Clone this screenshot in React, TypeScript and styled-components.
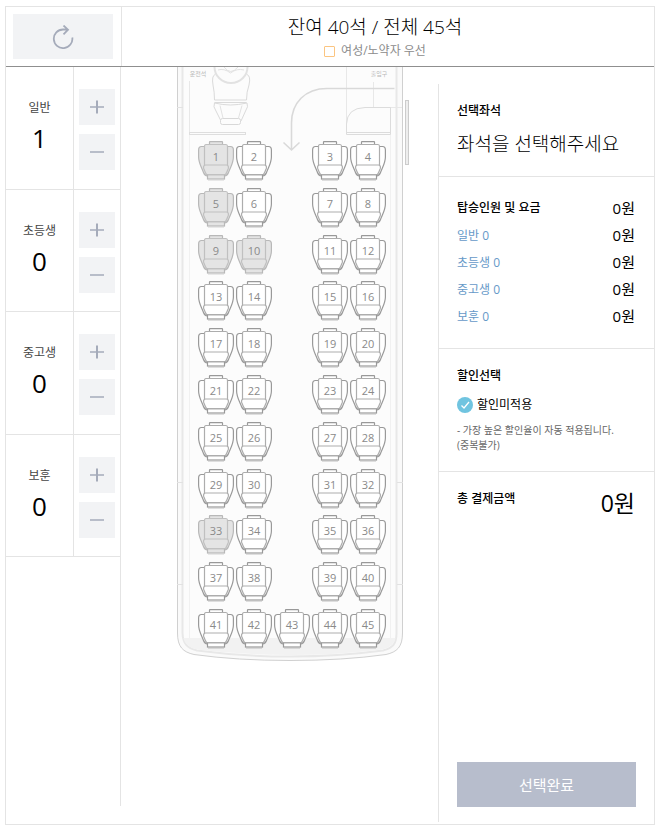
import React, { useState } from "react";
import styled, { createGlobalStyle, css } from "styled-components";

const GlobalStyle = createGlobalStyle`
  * { box-sizing: border-box; }
  body {
    margin: 0;
    background: #fff;
    color: #000;
    font-family: "Open Sans", "Noto Sans CJK KR", sans-serif;
    font-size: 12px;
  }
  button, input { font: inherit; margin: 0; padding: 0; border: 0; }
  h1, h2, p { margin: 0; font-weight: 400; }
`;

const Page = styled.div`
  padding: 6px 6px 6px 5px;
`;

const Frame = styled.main`
  display: flex;
  flex-direction: column;
  min-height: calc(100vh - 12px);
  border: 1px solid #e4e4e4;
`;

const Header = styled.header`
  display: grid;
  grid-template-columns: 116px 1fr;
  height: 60px;
  border-bottom: 1px solid #8f8f8f;
`;

const ResetCell = styled.div`
  padding: 7px;
  border-right: 1px solid #e4e4e4;
`;

const ResetButton = styled.button`
  display: grid;
  place-items: center;
  width: 100px;
  height: 45px;
  background: #f2f3f5;
  cursor: pointer;
`;

const Summary = styled.div`
  display: flex;
  flex-direction: column;
  align-items: center;
  padding: 6px 26px 0 0;
`;

const Remaining = styled.h1`
  font-size: 19px;
  font-weight: 300;
  line-height: 28px;
`;

const Legend = styled.p`
  display: flex;
  align-items: center;
  gap: 6px;
  color: #8c8c8c;
  line-height: 20px;
`;

const Swatch = styled.span`
  width: 11px;
  height: 11px;
  border: 1px solid #fbc581;
  border-radius: 1px;
`;

const Body = styled.div`
  display: grid;
  grid-template-columns: 115px 1fr 216px;
  flex: 1;
`;

const Passengers = styled.section`
  margin-bottom: 18px;
  border-right: 1px solid #e4e4e4;
`;

const PassengerRows = styled.div`
  display: grid;
  grid-template-rows: repeat(4, 1fr);
  height: 490px;
`;

const PassengerRow = styled.div`
  display: grid;
  grid-template-columns: 68px 1fr;
  border-bottom: 1px solid #e4e4e4;
`;

const PassengerCount = styled.div`
  display: flex;
  flex-direction: column;
  align-items: center;
  padding-top: 32px;
  border-right: 1px solid #e4e4e4;
`;

const PassengerName = styled.span`
  color: #444;
  line-height: 18px;
`;

const PassengerNumber = styled.output`
  margin-top: 3px;
  font-size: 26px;
  line-height: 36px;
`;

const Steppers = styled.div`
  display: flex;
  flex-direction: column;
  gap: 9px;
  padding: 22px 5px 0;
`;

const StepButton = styled.button`
  display: grid;
  place-items: center;
  width: 36px;
  height: 36px;
  background: #f2f3f5;
  cursor: pointer;
`;

const BusArea = styled.section`
  display: flex;
  justify-content: center;
  align-items: flex-start;
  padding-left: 29px;
`;

const Bus = styled.div`
  position: relative;
  width: 234px;
  height: 596px;
  padding: 74px 0 0 21px;
`;

const BusDrawing = styled.svg`
  position: absolute;
  inset: 0;
`;

const Seats = styled.div`
  position: relative;
  display: grid;
  grid-template-columns: repeat(5, 36px);
  grid-template-rows: repeat(11, 40px);
  column-gap: 2px;
  align-content: space-between;
  height: 508px;
`;

const SeatButton = styled.button<{ $column: number; $active: boolean }>`
  display: grid;
  grid-column: ${(p) => p.$column};
  background: none;
  color: #8a8a8a;
  font-size: 11px;
  line-height: 32px;
  cursor: pointer;
  & > * { grid-area: 1 / 1; }
  svg {
    fill: ${(p) => (p.$active ? "#cfe6f4" : "#fff")};
    stroke: #999;
    stroke-width: 1.2;
  }
  .inner { stroke: #adadad; }
  &:disabled { cursor: default; }
  &:disabled svg { fill: #e4e4e4; stroke: #b8b8b8; }
  &:disabled .inner { stroke: #c0c0c0; }
`;

const Side = styled.aside`
  display: flex;
  flex-direction: column;
  margin: 17px 0 2px;
  border-left: 1px solid #e4e4e4;
`;

const Block = styled.section<{ $top: number; $bottom: number; $last?: boolean }>`
  padding: ${(p) => p.$top}px 19px ${(p) => p.$bottom}px 18px;
  ${(p) => !p.$last && css`border-bottom: 1px solid #e4e4e4;`}
`;

const Title = styled.h2`
  font-size: 12px;
  font-weight: 500;
  line-height: 20px;
`;

const Chosen = styled.p`
  margin-top: 8px;
  font-size: 19px;
  font-weight: 300;
  line-height: 30px;
`;

const Fare = styled.div`
  display: flex;
  justify-content: space-between;
  align-items: center;
  height: 27px;
`;

const FareName = styled.span`
  color: #6699c8;
`;

const Price = styled.span`
  font-size: 15px;
  line-height: 20px;
`;

const Discount = styled.label`
  display: flex;
  align-items: center;
  gap: 4px;
  margin-top: 9px;
  line-height: 20px;
`;

const Radio = styled.input`
  appearance: none;
  width: 16px;
  height: 16px;
  border-radius: 50%;
  background: #70c4e0;
`;

const RadioMark = styled.span`
  display: grid;
  & > * { grid-area: 1 / 1; }
  svg { pointer-events: none; }
`;

const Note = styled.p`
  margin-top: 8px;
  color: #666;
  font-size: 10px;
  line-height: 15px;
`;

const Total = styled.div`
  display: flex;
  justify-content: space-between;
`;

const TotalPrice = styled.strong`
  font-size: 23px;
  font-weight: 400;
  line-height: 28px;
`;

const Submit = styled.button`
  height: 45px;
  margin: auto 18px 15px;
  background: #b7bdcc;
  color: #fff;
  font-size: 15px;
  cursor: pointer;
`;

const groups = ["일반", "초등생", "중고생", "보훈"];
const taken = new Set([1, 5, 9, 10, 33]);
const columns = [1, 2, 4, 5];
const seats = Array.from({ length: 45 }, (_, i) => ({
  number: i + 1,
  column: i < 40 ? columns[i % 4] : i - 39,
}));

function Seat({ number, column, active, onToggle }: {
  number: number; column: number; active: boolean; onToggle: () => void;
}) {
  return (
    <SeatButton type="button" $column={column} $active={active} aria-pressed={active}
      disabled={taken.has(number)} onClick={onToggle}>
      <svg width="36" height="40" viewBox="0 0 36 40" aria-hidden="true">
        <path d="M10 39.500h16" strokeOpacity=".3" />
        <path d="M7 5.500H3.500Q.6 5.500.6 9V16C.6 22 3.500 26 5.500 31.500Q6.500 34.500 9.500 35H26.500Q29.500 34.500 30.500 31.500C32.500 26 35.400 22 35.400 16V9Q35.400 5.500 32.500 5.500H29z" />
        <rect x="11.500" y=".6" width="13" height="4" rx=".5" />
        <path className="inner" d="M8 3.500H28Q29.500 3.500 29.500 5.500V25H6.500V5.500Q6.500 3.500 8 3.500z" />
        <path className="inner" d="M7.500 24H28.500Q31 24.500 30.300 27.500Q29 31.500 26.500 35H9.500Q7 31.500 5.700 27.500Q5 24.500 7.500 24z" />
        <rect x="9.500" y="33.800" width="17" height="4.200" />
      </svg>
      <span>{number}</span>
    </SeatButton>
  );
}

function BusShape() {
  return (
    <BusDrawing width="234" height="596" viewBox="0 0 234 596" fill="none" stroke="#e2e2e2" aria-hidden="true">
      <path d="M.5-2V566C.5 580 6 585 17 587.500Q60 593.500 113 593.500Q166 593.500 209 587.500C220 585 225.500 580 225.500 566V-2" fill="#fafafa" stroke="#d0d0d0" />
      <path d="M5.500-2V566C6 577 10 581 20 583.500Q65 589.500 113 589.500Q161 589.500 206 583.500C216 581 219.500 577 219.500 566V-2" fill="#fcfcfc" stroke="#e8e8e8" strokeWidth="2" />
      <path d="M6.500 571H218.500Q217 580 205 582.500Q160 588 113 588Q65 588 20 582.500Q8 580 6.500 571z" fill="#f2f2f2" stroke="none" />
      <path d="M12.500 14V571M213.500 40V571" stroke="#f1f1f1" />
      <path d="M0 40.500H6M0 415.500H6M220 415.500H226M0 517.500H6M220 517.500H226" />
      <path d="M12.500 14V65M169.500 0V66M196.500 15V40M213 40.500H225" stroke="#e8e8e8" />
      <path d="M37.500 0A16.500 16 0 0 0 70.500 0" strokeWidth="2" />
      <path d="M47 0Q53.500 9 61 0M41 3Q47 1 53.500 6Q60 1 67 3" />
      <path d="M38 7.500Q34.500 9 36 18Q37.500 25 37.500 33H69.500Q69.500 25 72 18Q74 9 70 7.500M37.500 35.500H69.500" stroke="#dadada" />
      <path d="M37.500 36Q36 40 38.500 43L44 54M70 36Q71.500 40 69 43L64 54M37.500 36Q46 38 53.500 38T70 36" stroke="#dadada" />
      <path d="M43 38.500L46 51M65 38.500L61.500 51" />
      <rect x="43.500" y="51.500" width="20" height="6" rx="2" fill="#fcfcfc" stroke="#d8d8d8" />
      <rect x="12.500" y="65.500" width="56" height="2" stroke="#dedede" />
      <path d="M169.500 67.500V57Q170 41 188 40.500H213.500V67.500zM169.500 65.500H213.500" stroke="#dcdcdc" />
      <path d="M217.500 21.500H150C128 21.500 114.500 36 114.500 56V83M106.500 75.500L114.500 83L122.500 75.500" stroke="#d9d9d9" strokeWidth="1.600" />
      <rect x="228.500" y="33.500" width="3" height="64" fill="#eee" stroke="#ccc" />
      <g fill="#b8b8b8" stroke="none" fontSize="6" textAnchor="middle">
        <text x="21" y="9">운전석</text>
        <text x="202" y="9">출입구</text>
      </g>
    </BusDrawing>
  );
}

export default function App() {
  const [counts, setCounts] = useState([1, 0, 0, 0]);
  const [selected, setSelected] = useState<number[]>([]);
  const step = (index: number, by: number) =>
    setCounts((c) => c.map((n, i) => (i === index ? Math.max(0, n + by) : n)));
  const toggle = (n: number) =>
    setSelected((s) => (s.includes(n) ? s.filter((x) => x !== n) : [...s, n]));
  const reset = () => {
    setCounts([1, 0, 0, 0]);
    setSelected([]);
  };

  return (
    <Page>
      <GlobalStyle />
      <Frame>
        <Header>
          <ResetCell>
            <ResetButton type="button" aria-label="초기화" onClick={reset}>
              <svg width="22" height="24" viewBox="0 0 22 24" fill="none" stroke="#a5abba" strokeWidth="1.800" aria-hidden="true">
                <path d="M20.300 12.500A9.300 9.300 0 1 1 11 4.500H15.500M11.500.5L16 4.700L11.500 9.300" />
              </svg>
            </ResetButton>
          </ResetCell>
          <Summary>
            <Remaining>잔여 40석 / 전체 45석</Remaining>
            <Legend><Swatch />여성/노약자 우선</Legend>
          </Summary>
        </Header>
        <Body>
          <Passengers>
            <PassengerRows>
              {groups.map((name, i) => (
                <PassengerRow key={name}>
                  <PassengerCount>
                    <PassengerName>{name}</PassengerName>
                    <PassengerNumber>{counts[i]}</PassengerNumber>
                  </PassengerCount>
                  <Steppers>
                    <StepButton type="button" aria-label={`${name} 추가`} onClick={() => step(i, 1)}>
                      <svg width="14" height="14" stroke="#a5abba" aria-hidden="true">
                        <path d="M0 7h14" strokeWidth="1.500" />
                        <path d="M7 .5v13" strokeWidth="2" />
                      </svg>
                    </StepButton>
                    <StepButton type="button" aria-label={`${name} 빼기`} onClick={() => step(i, -1)}>
                      <svg width="14" height="14" stroke="#a5abba" aria-hidden="true">
                        <path d="M0 7h14" strokeWidth="1.500" />
                      </svg>
                    </StepButton>
                  </Steppers>
                </PassengerRow>
              ))}
            </PassengerRows>
          </Passengers>
          <BusArea>
            <Bus>
              <BusShape />
              <Seats>
                {seats.map((s) => (
                  <Seat key={s.number} {...s} active={selected.includes(s.number)} onToggle={() => toggle(s.number)} />
                ))}
              </Seats>
            </Bus>
          </BusArea>
          <Side>
            <Block $top={17} $bottom={17}>
              <Title>선택좌석</Title>
              <Chosen>{selected.length ? selected.join(", ") : "좌석을 선택해주세요"}</Chosen>
            </Block>
            <Block $top={17} $bottom={19}>
              <Fare><Title>탑승인원 및 요금</Title><Price>0원</Price></Fare>
              {groups.map((name) => (
                <Fare key={name}><FareName>{name} 0</FareName><Price>0원</Price></Fare>
              ))}
            </Block>
            <Block $top={17} $bottom={18}>
              <Title>할인선택</Title>
              <Discount>
                <RadioMark>
                  <Radio type="radio" name="discount" defaultChecked />
                  <svg width="16" height="16" fill="none" stroke="#fff" strokeWidth="1.300" aria-hidden="true">
                    <path d="M4.500 8.500l2.500 2.500 5-6" />
                  </svg>
                </RadioMark>
                할인미적용
              </Discount>
              <Note>- 가장 높은 할인율이 자동 적용됩니다.<br />(중복불가)</Note>
            </Block>
            <Block $top={17} $bottom={17} $last>
              <Total><Title>총 결제금액</Title><TotalPrice>0원</TotalPrice></Total>
            </Block>
            <Submit type="button">선택완료</Submit>
          </Side>
        </Body>
      </Frame>
    </Page>
  );
}
